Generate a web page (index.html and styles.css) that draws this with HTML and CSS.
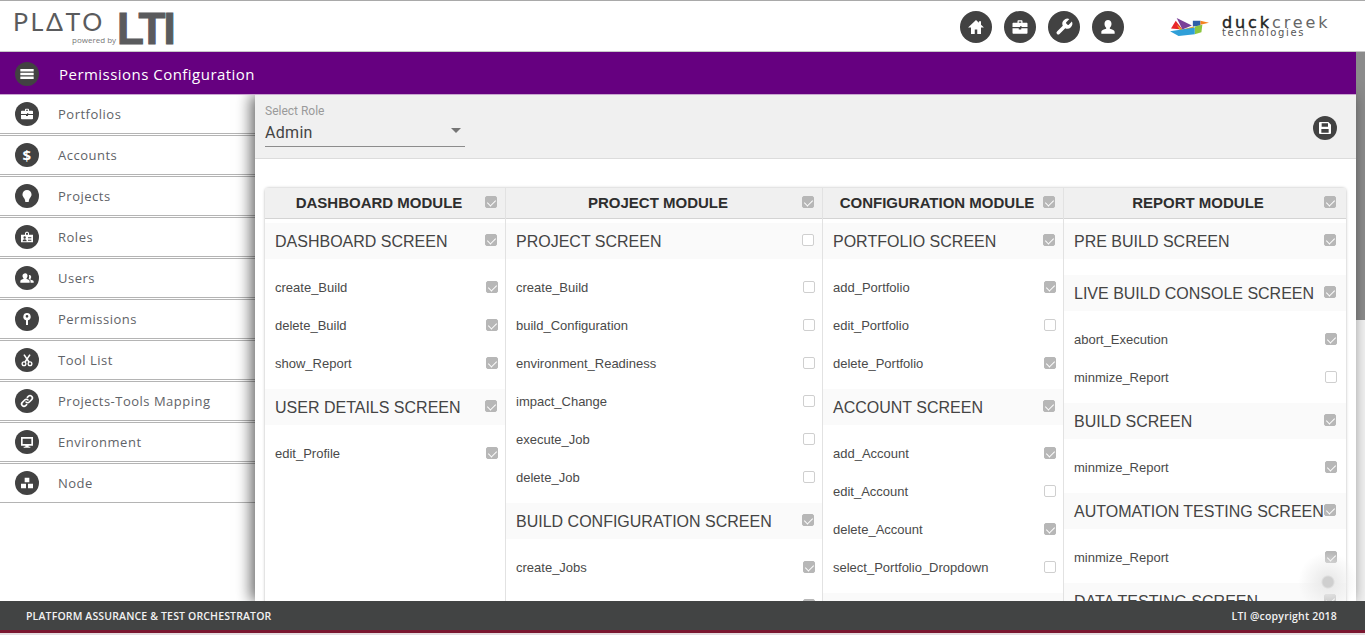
FILE: index.html
```html
<!DOCTYPE html>
<html lang="en">
<head>
<meta charset="UTF-8">
<meta name="viewport" content="width=device-width, initial-scale=1.0">
<title>Permissions Configuration</title>
<link rel="stylesheet" href="styles.css">
</head>
<body>
<svg class="icon-defs" width="0" height="0">
    <symbol id="i-home" viewBox="0 0 24 24"><path d="M12 3.5 2.5 12.5H6V20.5h4.5V15h3v5.5H18V12.5h3.5L18 9.2V5h-2.5v1.8z"/></symbol>
    <symbol id="i-case" viewBox="0 0 24 24"><path d="M9 7V5.2C9 4.5 9.5 4 10.2 4h3.6c.7 0 1.2.5 1.2 1.2V7h4.8c.7 0 1.2.5 1.2 1.2V12h-7v-1h-2v1H3V8.2C3 7.5 3.5 7 4.2 7zm1.5 0h3V5.5h-3zM3 13.5h7.500V15h3v-1.5H21v5.300c0 .7-.5 1.200-1.200 1.200H4.200C3.500 20 3 19.500 3 18.800z" fill-rule="evenodd"/></symbol>
    <symbol id="i-wrench" viewBox="0 0 24 24"><path d="M14.7 6.3a1 1 0 0 0 0 1.4l1.6 1.6a1 1 0 0 0 1.4 0l3.77-3.77a6 6 0 0 1-7.94 7.94l-6.91 6.91a2.12 2.12 0 0 1-3-3l6.91-6.91a6 6 0 0 1 7.94-7.94l-3.76 3.76z"/></symbol>
    <symbol id="i-user" viewBox="0 0 24 24"><path d="M12 3.5c2.5 0 4.2 2 4.2 4.7 0 2-.8 3.7-2 4.7v1.3c2.5.8 5.8 1.5 5.8 4v2H4v-2c0-2.5 3.3-3.2 5.8-4v-1.3c-1.2-1-2-2.7-2-4.7 0-2.7 1.7-4.7 4.2-4.7z"/></symbol>
    <symbol id="i-bulb" viewBox="0 0 24 24"><path d="M12 3a6.8 6.8 0 0 1 6.8 6.800c0 2.600-1.500 4-2.600 5.500-.6.900-1 1.800-1.200 2.700l-.5 3h-5l-.5-3c-.2-.9-.6-1.800-1.200-2.700-1.100-1.500-2.600-2.900-2.600-5.500A6.800 6.800 0 0 1 12 3z"/></symbol>
    <symbol id="i-badge" viewBox="0 0 24 24"><path d="M3 8.5h6v-2C9 5 10.3 4 12 4s3 1 3 2.500v2h6V20H3zM10.500 8.500h3v-2c0-.5-.7-1-1.500-1s-1.500.5-1.500 1zM8.500 11a1.800 1.800 0 1 0 0 3.600 1.800 1.800 0 0 0 0-3.600zM5.500 18.500h6c0-2-1.300-3-3-3s-3 1-3 3zM13.500 12v1h5v-1zM13.500 14.500v1h5v-1zM13.500 17v1h5v-1z" fill-rule="evenodd"/></symbol>
    <symbol id="i-users" viewBox="0 0 24 24"><path d="M9.500 5c2 0 3.300 1.600 3.300 3.700 0 1.500-.6 2.800-1.500 3.500v1.300c2 .6 4.700 1.200 4.700 3.300V19H2v-2.200c0-2.100 2.700-2.700 4.700-3.300v-1.300c-.9-.7-1.500-2-1.500-3.500C5.200 6.600 7.500 5 9.500 5zM15.500 7.500c1.700 0 2.800 1.300 2.800 3.100 0 1.200-.5 2.300-1.200 2.900v1c1.700.5 4.900 1 4.900 2.800V19h-4.800v-2.400c0-1.600-1.200-2.500-2.700-3.100.4-1 .7-2 .7-3.200 0-.9-.1-1.700-.4-2.400.2-.3.400-.4.700-.4z"/></symbol>
    <symbol id="i-key" viewBox="0 0 24 24"><path d="M12 3a5.500 5.500 0 0 1 1.500 10.800V21h-3v-7.200A5.500 5.500 0 0 1 12 3zm0 3a2 2 0 1 0 0 4 2 2 0 0 0 0-4z" fill-rule="evenodd"/></symbol>
    <symbol id="i-scissors" viewBox="0 0 24 24"><g fill="none" stroke="#fff" stroke-width="2"><circle cx="7.5" cy="17.5" r="2.8"/><circle cx="16.5" cy="17.5" r="2.8"/><path d="M9 15 16.5 4M15 15 7.5 4" stroke-width="2.4"/></g></symbol>
    <symbol id="i-link" viewBox="0 0 24 24"><g fill="none" stroke="#fff" stroke-width="2.4" stroke-linecap="round"><path d="M10.500 13.500a3.500 3.500 0 0 0 5 0l3.500-3.500a3.500 3.500 0 0 0-5-5l-1.500 1.500"/><path d="M13.500 10.500a3.500 3.500 0 0 0-5 0L5 14a3.500 3.500 0 0 0 5 5l1.500-1.500"/></g></symbol>
    <symbol id="i-screen" viewBox="0 0 24 24"><path d="M3 4.5h18v13h-6.500V19H17v1.500H7V19h2.500v-1.500H3zM5.500 7v8h13V7z" fill-rule="evenodd"/></symbol>
    <symbol id="i-nodes" viewBox="0 0 24 24"><path d="M8.500 4h7v7h-7zM3 13h7.500v7H3zM13.500 13H21v7h-7.500z"/></symbol>
    <symbol id="i-save" viewBox="0 0 24 24"><path d="M4.500 3H17l4 4v12.500a1.500 1.500 0 0 1-1.500 1.500h-15A1.500 1.500 0 0 1 3 19.500v-15A1.500 1.500 0 0 1 4.500 3zM7 5v5h9.500V5zM6.500 13.500V19h11v-5.500z" fill-rule="evenodd"/></symbol>
    <symbol id="i-bars" viewBox="0 0 24 24"><path d="M4 6h16v3H4zM4 10.500h16v3H4zM4 15h16v3H4z"/></symbol>
</svg>

<header class="topbar">
    <div class="brand">
        <div class="brand-plato">
            <span class="plato-name">PL&#916;TO</span>
            <span class="plato-sub">powered by</span>
        </div>
        <span class="brand-lti">LTI</span>
    </div>
    <nav class="top-icons">
        <a class="round round-lg"><svg><use href="#i-home"/></svg></a>
        <a class="round round-lg"><svg><use href="#i-case"/></svg></a>
        <a class="round round-lg"><svg><use href="#i-wrench"/></svg></a>
        <a class="round round-lg"><svg><use href="#i-user"/></svg></a>
    </nav>
    <div class="duck">
        <svg class="duck-bird" viewBox="0 0 44 20" width="42" height="19">
            <polygon points="7,3 14,12 2,11" fill="#e8262a"/>
            <polygon points="8,0 24,8 14,12" fill="#7a3f98"/>
            <polygon points="8,7 14,12 26,9 26,14 12,14" fill="#f2a41f"/>
            <polygon points="25,3 33,3 33,8 25,9" fill="#2f5fa8"/>
            <polygon points="33,3 42,5 33,7" fill="#f58220"/>
            <polygon points="27,9 35,7 34,15 27,17" fill="#8cc63f"/>
            <polygon points="1,14 27,10 27,17 10,19" fill="#2f9fd8"/>
        </svg>
        <div class="duck-text">
            <div class="duck-name"><b>duck</b>creek</div>
            <div class="duck-sub">technologies</div>
        </div>
    </div>
</header>

<div class="stage">
    <div class="stage-left">
        <div class="titlebar">
            <a class="round"><svg><use href="#i-bars"/></svg></a>
            <h1>Permissions Configuration</h1>
        </div>
        <div class="workspace">
            <ul class="sidebar">
                <li><a class="round"><svg><use href="#i-case"/></svg></a>Portfolios</li>
                <li><a class="round round-text">$</a>Accounts</li>
                <li><a class="round"><svg><use href="#i-bulb"/></svg></a>Projects</li>
                <li><a class="round"><svg><use href="#i-badge"/></svg></a>Roles</li>
                <li><a class="round"><svg><use href="#i-users"/></svg></a>Users</li>
                <li><a class="round"><svg><use href="#i-key"/></svg></a>Permissions</li>
                <li><a class="round"><svg><use href="#i-scissors"/></svg></a>Tool List</li>
                <li><a class="round"><svg><use href="#i-link"/></svg></a>Projects-Tools Mapping</li>
                <li><a class="round"><svg><use href="#i-screen"/></svg></a>Environment</li>
                <li><a class="round"><svg><use href="#i-nodes"/></svg></a>Node</li>
            </ul>
            <main class="content">
                <div class="toolbar">
                    <div class="role-select">
                        <div class="role-label">Select Role</div>
                        <div class="role-value">Admin<span class="caret"></span></div>
                    </div>
                    <a class="round"><svg><use href="#i-save"/></svg></a>
                </div>
                <div class="modules">
                    <section class="module mod-a">
                        <div class="mod-head"><span>DASHBOARD MODULE</span><i class="cb on"></i></div>
                        <div class="screen"><span>DASHBOARD SCREEN</span><i class="cb on"></i></div>
                        <ul class="perms">
                            <li>create_Build<i class="cb on"></i></li>
                            <li>delete_Build<i class="cb on"></i></li>
                            <li>show_Report<i class="cb on"></i></li>
                        </ul>
                        <div class="screen"><span>USER DETAILS SCREEN</span><i class="cb on"></i></div>
                        <ul class="perms">
                            <li>edit_Profile<i class="cb on"></i></li>
                        </ul>
                    </section>
                    <section class="module mod-b">
                        <div class="mod-head"><span>PROJECT MODULE</span><i class="cb on"></i></div>
                        <div class="screen"><span>PROJECT SCREEN</span><i class="cb"></i></div>
                        <ul class="perms">
                            <li>create_Build<i class="cb"></i></li>
                            <li>build_Configuration<i class="cb"></i></li>
                            <li>environment_Readiness<i class="cb"></i></li>
                            <li>impact_Change<i class="cb"></i></li>
                            <li>execute_Job<i class="cb"></i></li>
                            <li>delete_Job<i class="cb"></i></li>
                        </ul>
                        <div class="screen"><span>BUILD CONFIGURATION SCREEN</span><i class="cb on"></i></div>
                        <ul class="perms">
                            <li>create_Jobs<i class="cb on"></i></li>
                            <li>execute_All_Steps<i class="cb on"></i></li>
                        </ul>
                    </section>
                    <section class="module mod-c">
                        <div class="mod-head"><span>CONFIGURATION MODULE</span><i class="cb on"></i></div>
                        <div class="screen"><span>PORTFOLIO SCREEN</span><i class="cb on"></i></div>
                        <ul class="perms">
                            <li>add_Portfolio<i class="cb on"></i></li>
                            <li>edit_Portfolio<i class="cb"></i></li>
                            <li>delete_Portfolio<i class="cb on"></i></li>
                        </ul>
                        <div class="screen"><span>ACCOUNT SCREEN</span><i class="cb on"></i></div>
                        <ul class="perms">
                            <li>add_Account<i class="cb on"></i></li>
                            <li>edit_Account<i class="cb"></i></li>
                            <li>delete_Account<i class="cb on"></i></li>
                            <li>select_Portfolio_Dropdown<i class="cb"></i></li>
                        </ul>
                        <div class="screen"></div>
                    </section>
                    <section class="module mod-d">
                        <div class="mod-head"><span>REPORT MODULE</span><i class="cb on"></i></div>
                        <div class="screen"><span>PRE BUILD SCREEN</span><i class="cb on"></i></div>
                        <ul class="perms"></ul>
                        <div class="screen"><span>LIVE BUILD CONSOLE SCREEN</span><i class="cb on"></i></div>
                        <ul class="perms">
                            <li>abort_Execution<i class="cb on"></i></li>
                            <li>minmize_Report<i class="cb"></i></li>
                        </ul>
                        <div class="screen"><span>BUILD SCREEN</span><i class="cb on"></i></div>
                        <ul class="perms">
                            <li>minmize_Report<i class="cb on"></i></li>
                        </ul>
                        <div class="screen"><span>AUTOMATION TESTING SCREEN</span><i class="cb on"></i></div>
                        <ul class="perms">
                            <li>minmize_Report<i class="cb on"></i></li>
                        </ul>
                        <div class="screen"><span>DATA TESTING SCREEN</span><i class="cb on"></i></div>
                    </section>
                    <span class="ripple"></span>
                </div>
            </main>
        </div>
    </div>
    <div class="scrollbar"><div class="scroll-thumb"></div></div>
</div>

<footer class="footer">
    <span class="foot-left">PLATFORM ASSURANCE &amp; TEST ORCHESTRATOR</span>
    <span class="foot-right">LTI @copyright 2018</span>
</footer>
<div class="under-strip"></div>
</body>
</html>
```
FILE: styles.css
```css
* {
    box-sizing: border-box;
}
html, body {
    height: 100%;
}
body {
    margin: 0;
    height: 635px;
    overflow: hidden;
    display: flex;
    flex-direction: column;
    background-color: #fff;
    font-family: "Liberation Sans", Arial, sans-serif;
    color: #424242;
}
ul {
    list-style: none;
    margin: 0;
    padding: 0;
}
.icon-defs {
    position: absolute;
}

/* round dark buttons */
.round {
    flex: none;
    width: 24px;
    height: 24px;
    border-radius: 50%;
    background-color: #424242;
    display: flex;
    align-items: center;
    justify-content: center;
}
.round svg {
    width: 16px;
    height: 16px;
    fill: #fff;
}
.round-lg {
    width: 32px;
    height: 32px;
}
.round-lg svg {
    width: 20px;
    height: 20px;
}
.round-text {
    color: #fff;
    font-size: 15px;
    font-weight: bold;
}

/* header */
.topbar {
    flex: none;
    height: 52px;
    display: flex;
    align-items: center;
    border-top: 1px solid #a9a9a9;
    border-bottom: 1px solid #c8c8c8;
    padding-left: 15px;
}
.brand {
    display: flex;
    align-items: flex-start;
    width: 945px;
    color: #5a5b5d;
}
.brand-plato {
    width: 102px;
    display: flex;
    flex-direction: column;
}
.plato-name {
    font-family: "Lato", sans-serif;
    font-size: 25px;
    line-height: 23px;
    letter-spacing: 2.6px;
    margin: 3px 0 0 -2px;
}
.plato-sub {
    font-family: "Open Sans", sans-serif;
    font-size: 8px;
    line-height: 11px;
    padding: 1px 0 0 57px;
    white-space: nowrap;
    color: #777;
}
.brand-lti {
    font-size: 44px;
    line-height: 34px;
    font-weight: bold;
    letter-spacing: -2px;
    margin-top: 5px;
    -webkit-text-stroke: 1px #5a5b5d;
}
.top-icons {
    display: flex;
    gap: 12px;
    width: 209px;
    padding-top: 1px;
}
.duck {
    display: flex;
    align-items: center;
    gap: 11px;
    margin-top: 2px;
}
.duck-name {
    font-family: "DejaVu Sans", sans-serif;
    font-size: 16px;
    line-height: 12px;
    letter-spacing: 2.9px;
    color: #666;
}
.duck-name b {
    font-weight: normal;
    color: #222;
    -webkit-text-stroke: .4px #222;
}
.duck-sub {
    font-family: "DejaVu Sans", sans-serif;
    font-size: 10px;
    line-height: 8px;
    letter-spacing: 1.6px;
    color: #555;
}

/* below header */
.stage {
    flex: none;
    height: 549px;
    display: flex;
}
.stage-left {
    flex: 1;
    min-width: 0;
    display: flex;
    flex-direction: column;
}
.scrollbar {
    flex: none;
    width: 9px;
    background-color: #f1f1f1;
}
.scroll-thumb {
    height: 268px;
    background-color: #8b8b8b;
}
.titlebar {
    flex: none;
    height: 43px;
    padding: 1px 0 0 15px;
    display: flex;
    align-items: center;
    gap: 20px;
    position: relative;
    z-index: 1;
    background-color: #660080;
    border-bottom: 1px solid #c9a6d0;
}
.titlebar .round svg {
    width: 20px;
    height: 20px;
}
.titlebar h1 {
    margin: 0;
    font-family: "Open Sans", sans-serif;
    font-size: 15px;
    font-weight: 500;
    letter-spacing: .47px;
    color: #fff;
}
.workspace {
    flex: 1;
    min-height: 0;
    display: flex;
}

/* sidebar */
.sidebar {
    flex: none;
    width: 255px;
}
.sidebar li {
    height: 41px;
    display: flex;
    align-items: center;
    gap: 19px;
    padding-left: 15px;
    border-bottom: 3px double #b4b4b4;
    font-family: "Open Sans", sans-serif;
    font-size: 13px;
    letter-spacing: .5px;
    color: #5f6368;
}
.sidebar li:last-child {
    height: 39px;
    border-bottom: 1px solid #b4b4b4;
}

/* main */
.content {
    flex: 1;
    min-width: 0;
    position: relative;
    background-color: #fff;
    box-shadow: -4px 0 14px rgba(0, 0, 0, .6);
    overflow: hidden;
}
.toolbar {
    height: 64px;
    padding: 0 19px 0 10px;
    display: flex;
    align-items: center;
    justify-content: space-between;
    background-color: #f0f0f0;
    border-bottom: 1px solid #dcdcdc;
}
.toolbar .round {
    margin-top: 2px;
}
.role-select {
    width: 200px;
    margin-top: -2px;
    font-family: "Roboto", sans-serif;
}
.role-label {
    font-size: 12px;
    line-height: 14px;
    color: #9a9a9a;
}
.role-value {
    height: 29px;
    padding-top: 5px;
    display: flex;
    justify-content: space-between;
    font-size: 16px;
    letter-spacing: .3px;
    line-height: 20px;
    color: #444;
    border-bottom: 1px solid #8c8c8c;
}
.caret {
    width: 0;
    height: 0;
    margin: 5px 4px 0 0;
    border-left: 5.5px solid transparent;
    border-right: 5.5px solid transparent;
    border-top: 5px solid #757575;
}
.modules {
    display: flex;
    margin: 29px 10px 0;
    position: relative;
    border-radius: 4px 4px 0 0;
    box-shadow: 0 0 3px rgba(0, 0, 0, .3);
}
.module {
    flex: none;
    padding-bottom: 60px;
    border-right: 1px solid #e2e2e2;
}
.mod-a { width: 241px; }
.mod-b { width: 317px; }
.mod-c { width: 241px; }
.mod-d { width: 282px; border-right: 0; }
.mod-head {
    height: 31px;
    margin-bottom: 4px;
    padding: 0 8px 2px 0;
    display: flex;
    align-items: center;
    background-color: #f0f0f0;
    border-bottom: 1px solid #d4d4d4;
}
.mod-head span {
    flex: 1;
    text-align: center;
    font-size: 15px;
    font-weight: bold;
    color: #2e2e2e;
    padding-left: 8px;
    white-space: nowrap;
}
.screen {
    height: 36px;
    padding: 0 8px 0 10px;
    display: flex;
    align-items: center;
    justify-content: space-between;
    background-color: #fafafa;
    font-size: 16px;
    color: #444;
    white-space: nowrap;
}
.screen span {
    padding-top: 2px;
}
.screen .cb {
    margin-bottom: 2px;
}
.perms {
    padding: 9px 0 7px;
}
.perms li {
    height: 38px;
    padding: 0 7px 0 10px;
    display: flex;
    align-items: center;
    justify-content: space-between;
    font-size: 13px;
    color: #4a4a4a;
}
.mod-d .mod-head,
.mod-d .screen {
    padding-right: 10px;
}
.mod-d .perms li {
    padding-right: 9px;
}
.cb {
    flex: none;
    display: block;
    position: relative;
    width: 12px;
    height: 12px;
    border: 1px solid #cfcfcf;
    border-radius: 2px;
    background-color: #fff;
}
.cb.on {
    border-color: #b7b7b7;
    background-color: #b7b7b7;
}
.cb.on::after {
    content: "";
    position: absolute;
    left: 3px;
    top: 1px;
    width: 4px;
    height: 7px;
    border: solid #fff;
    border-width: 0 1px 1px 0;
    transform: rotate(45deg);
}
.ripple {
    position: absolute;
    left: 1033px;
    top: 364px;
    width: 60px;
    height: 60px;
    border-radius: 50%;
    background: radial-gradient(circle, #cfcfcf 0, #cfcfcf 5px, #ececec 7px, rgba(240, 240, 240, 0) 70%);
}

/* footer */
.footer {
    flex: none;
    height: 32px;
    padding: 0 28px 0 26px;
    display: flex;
    align-items: center;
    justify-content: space-between;
    background-color: #424444;
    border-bottom: 3px solid #7a1730;
    position: relative;
    color: #f2f2f2;
    font-family: "Open Sans", sans-serif;
    font-size: 10.5px;
    font-weight: 600;
}
.foot-left {
    letter-spacing: .15px;
}
.foot-right {
    letter-spacing: .2px;
}
.under-strip {
    flex: none;
    height: 2px;
    background-color: #e4dde0;
}
```
